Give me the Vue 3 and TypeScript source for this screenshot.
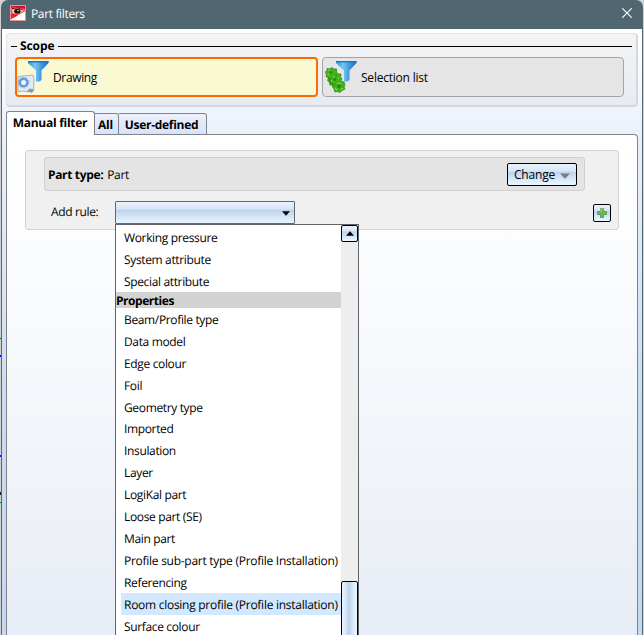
<script setup lang="ts">
interface Group {
  title?: string
  items: string[]
}

const groups: Group[] = [
  { items: ['Working pressure', 'System attribute', 'Special attribute'] },
  {
    title: 'Properties',
    items: [
      'Beam/Profile type',
      'Data model',
      'Edge colour',
      'Foil',
      'Geometry type',
      'Imported',
      'Insulation',
      'Layer',
      'LogiKal part',
      'Loose part (SE)',
      'Main part',
      'Profile sub-part type (Profile Installation)',
      'Referencing',
      'Room closing profile (Profile installation)',
      'Surface colour',
    ],
  },
]
const highlighted = 'Room closing profile (Profile installation)'
const backdropMarks = [
  { top: 338, height: 1, color: '#008000' },
  { top: 355, height: 2, color: '#0000ff' },
  { top: 455, height: 2, color: '#0000ff' },
  { top: 492, height: 3, color: '#101020' },
  { top: 502, height: 1, color: '#008000' },
]
</script>

<template>
  <div class="screen">
    <i
      v-for="m in backdropMarks"
      :key="m.top"
      class="mark"
      :style="{ top: m.top + 'px', height: m.height + 'px', background: m.color }"
    />
    <div class="window">
      <header class="titlebar">
        <svg class="logo" width="16" height="16" viewBox="0 0 16 16">
          <rect width="16" height="16" fill="#d80c2c" />
          <path d="M0 3 L6 2 L15 4 V8 L9 10 L1 9 Z" fill="#ef6b62" />
          <path d="M2 5 Q7 1 13 6 Q8 10 3 8 Z" fill="#f8c8bc" />
          <ellipse cx="7.3" cy="6.3" rx="3.2" ry="2.5" fill="#2a1012" />
          <path d="M2 3.7 Q8 1.5 12 4.5" fill="none" stroke="#6a1018" stroke-width="1" />
          <circle cx="8" cy="5.5" r=".7" fill="#fff" />
          <path d="M1 15 V14 L15 6.5 V15 Z" fill="#fff" />
          <path d="M0 10 L7 11 L0 14.5 Z" fill="#e12a3c" />
          <rect x=".5" y=".5" width="15" height="15" fill="none" stroke="#ee8d92" />
        </svg>
        <span class="title">Part filters</span>
        <svg class="close" width="10" height="10" viewBox="0 0 10 10">
          <path d="M.3 .3 L9.7 9.7 M9.7 .3 L.3 9.7" stroke="#fff" stroke-width="1.1" />
        </svg>
      </header>

      <main class="body">
        <section class="scope">
          <div class="legend"><i class="dash" /><b>Scope</b><i class="rule" /></div>
          <div class="choices">
            <button class="choice selected">
              <svg width="32" height="34" viewBox="0 0 32 34">
                <defs>
                  <linearGradient id="funnel" x1="0" x2="1">
                    <stop offset="0" stop-color="#2f8fd8" />
                    <stop offset=".35" stop-color="#7cc4f4" />
                    <stop offset=".65" stop-color="#3a9ae0" />
                    <stop offset="1" stop-color="#1b70bd" />
                  </linearGradient>
                </defs>
                <path d="M11 1 H31.5 V3 L24.5 10.5 V20 L22.5 21.5 H19 V10.5 L11 3 Z" fill="url(#funnel)" />
                <path d="M11 1 H31.5 V2.4 H11 Z" fill="#1878c8" />
                <path d="M1 16.5 L16 15 L17 19 L16.5 31 L13 29.5 L12 32 L6 31 L1 32 Z" fill="#e3e9f5" stroke="#8fa3c6" stroke-width=".8" />
                <path d="M10 31 L13 28.5 L17 29.5 L15 33 Z" fill="#8797b3" />
                <circle cx="6.6" cy="22.5" r="3.8" fill="#edf5fb" stroke="#5f9fd2" stroke-width="2.6" />
                <circle cx="6.6" cy="22.5" r="5.4" fill="none" stroke="#86b5dd" stroke-width="1" stroke-dasharray="1.7 1.7" />
              </svg>
              <span>Drawing</span>
            </button>
            <button class="choice other">
              <svg width="32" height="34" viewBox="0 0 32 34">
                <path d="M11 1 H31.5 V3 L24.5 10.5 V20 L22.5 21.5 H19 V10.5 L11 3 Z" fill="url(#funnel)" />
                <path d="M11 1 H31.5 V2.4 H11 Z" fill="#1878c8" />
                <g fill="#43b21d" stroke="#2c8f12" stroke-width=".8">
                  <path d="M2 8.5 L5 9 L6.5 7.5 L9 9 L11.5 9 L11.5 12 L13 14 L16 14 L15.5 17 L17 19 L15.5 21 L19 22 L20 25 L19 27 L20 29 L17 30.5 L15 32.5 L12.5 31.5 L10 32 L9 29 L7.5 27 L8 25 L5 25 L4.5 22 L2.5 20.5 L3.5 18 L1 16.5 L1.5 14 L0 12 L2 11 Z" />
                </g>
                <g fill="#288a10">
                  <circle cx="6" cy="12.5" r="1.3" />
                  <circle cx="10" cy="19.5" r="1.4" />
                  <circle cx="14" cy="26.5" r="1.9" />
                  <path d="M3 17 L7 18 L6 22 L9 24 L12 23 L9 26 L4 23 Z M9 16 L13 14 L11 17 Z" opacity=".6" />
                </g>
                <path d="M3 10.5 L5 10 M8 16.5 L10 17 M3 14 L4 15 M12 23.5 L16 23 M10 28 L12 30 M16 29.5 L18 28 M13 17.5 L14 19 M6 20 L7 22" stroke="#78dc4b" stroke-width="1.1" />
              </svg>
              <span>Selection list</span>
            </button>
          </div>
        </section>

        <nav class="tabs">
          <div class="tab active">Manual filter</div>
          <div class="tab all">All</div>
          <div class="tab user">User-defined</div>
        </nav>

        <section class="page">
          <div class="card">
            <div class="part">
              <b>Part type:</b><span class="value">Part</span>
              <button class="change">
                <span>Change</span>
                <svg width="10" height="6" viewBox="0 0 10 6"><path d="M0 .5 H10 L5 5.7 Z" fill="#7c7c7c" /></svg>
              </button>
            </div>
            <div class="add">
              <label>Add rule:</label>
              <div class="combo">
                <svg width="8" height="5" viewBox="0 0 8 5"><path d="M0 .3 H8 L4 4.8 Z" fill="#000" /></svg>
                <div class="dropdown">
                  <div class="list">
                    <template v-for="(g, gi) in groups" :key="gi">
                      <div v-if="g.title" class="group">{{ g.title }}</div>
                      <div
                        v-for="item in g.items"
                        :key="item"
                        class="item"
                        :class="{ hot: item === highlighted, long: item.length > 40 }"
                      >{{ item }}</div>
                    </template>
                  </div>
                  <div class="scroll">
                    <div class="up">
                      <svg width="8" height="5" viewBox="0 0 8 5"><path d="M0 4.7 H8 L4 .3 Z" fill="#000" /></svg>
                    </div>
                    <div class="thumb" />
                  </div>
                </div>
              </div>
              <button class="plus">
                <svg width="12" height="12" viewBox="0 0 12 12">
                  <path d="M4.5 1.5 H7.5 V4.5 H10.5 V7.5 H7.5 V10.5 H4.5 V7.5 H1.5 V4.5 H4.5 Z" fill="#6cb65a" stroke="#5f9e52" />
                  <path d="M5 5 V2 H7" fill="none" stroke="#9ed78c" />
                </svg>
              </button>
            </div>
          </div>
        </section>
      </main>
    </div>
  </div>
</template>

<style>
body {
  margin: 0;
  overflow: hidden;
}
</style>

<style scoped>
.screen,
.screen * {
  box-sizing: border-box;
}
.screen {
  position: relative;
  width: 644px;
  height: 635px;
  padding: 0 1px;
  overflow: hidden;
  background: #d2d2d2;
  font: 12px/16px 'Open Sans', 'Noto Sans', sans-serif;
  letter-spacing: -0.35px;
  text-rendering: geometricPrecision;
  color: #000;
}
button {
  margin: 0;
  padding: 0;
  font: inherit;
  color: inherit;
  letter-spacing: inherit;
}
.mark {
  position: absolute;
  left: 0;
  width: 1px;
}
.window {
  width: 642px;
  height: 635px;
  display: flex;
  flex-direction: column;
  border-radius: 7px 7px 0 0;
  overflow: hidden;
  background: #506772;
}
.titlebar {
  display: flex;
  align-items: center;
  height: 29px;
  flex: none;
  padding: 0 11px 3px 9px;
  color: #fff;
}
.title {
  margin-left: 5px;
  padding-top: 2px;
  flex: 1;
}
.body {
  flex: 1;
  margin: 0 1px;
  padding: 4px 4px 0;
  display: flex;
  flex-direction: column;
  background: linear-gradient(#fff 0, #f2f6fd 70px, #ebf0fa 106px, #dce8f6 230px, #c9dcf1 380px, #c5d9f0 100%);
}
.scope {
  flex: none;
  height: 74px;
  border: 1px solid #e3e4e6;
  border-right: 2px solid #d5d9de;
  border-bottom: 2px solid #d3d7dd;
  border-radius: 4px;
  background: linear-gradient(#f4f4f4, #e7ebf2);
  padding: 4px 4px 0 4px;
}
.legend {
  display: flex;
  align-items: center;
  height: 16px;
  letter-spacing: -0.1px;
}
.legend b {
  margin: 0 4px 0 3px;
}
.dash,
.rule {
  height: 1px;
  background: #000;
}
.dash {
  width: 6px;
}
.rule {
  flex: 1;
}
.choices {
  display: flex;
  gap: 4px;
  margin: 3px 0 0 4px;
}
.choice {
  display: flex;
  align-items: center;
  width: 303px;
  height: 40px;
  padding-left: 2px;
  border: 1px solid #a5a5a7;
  border-radius: 4px;
  background: #e5e5e5;
}
.choice.other {
  width: 302px;
  letter-spacing: -0.22px;
}
.choice.selected {
  padding-left: 0;
  border: 2px solid #ff6a00;
  background: #fafad2;
}
.choice span {
  margin-left: 4px;
  padding-top: 2px;
}
.tabs {
  display: flex;
  align-items: flex-end;
  flex: none;
  height: 24px;
  margin-top: 4px;
  font-weight: bold;
  letter-spacing: -0.28px;
}
.tab {
  height: 22px;
  padding: 3px 2px 0 0;
  border: 1px solid #7f8288;
  border-left: 0;
  border-radius: 0 3px 0 0;
  background: linear-gradient(#ecf0fb, #d7e2fb);
  text-align: center;
  white-space: nowrap;
}
.tab.active {
  width: 89px;
  height: 24px;
  padding-right: 1px;
  border-left: 1px solid #7f8288;
  border-bottom: 0;
  border-radius: 3px 3px 0 0;
  background: #fff;
}
.tab.all {
  width: 24px;
}
.tab.user {
  width: 88px;
}
.page {
  flex: 1;
  margin-top: -1px;
  padding: 15px 18px 0;
  border: 1px solid #808287;
  border-bottom: 0;
  border-top-right-radius: 4px;
  background: linear-gradient(#fff 0, #fcfdff 100px, #f2f6fa 300px, #edf0f6 400px, #e7edf6 100%);
  position: relative;
}
.page::before {
  content: '';
  position: absolute;
  left: 0;
  top: -1px;
  width: 87px;
  height: 1px;
  background: #fff;
}
.card {
  height: 80px;
  width: 594px;
  border: 1px solid #d2d2d2;
  border-radius: 3px;
  background: #f0f0f0;
  padding: 6px 7px 0 18px;
}
.part {
  display: flex;
  align-items: center;
  width: 541px;
  height: 34px;
  padding: 0 7px 0 3px;
  border: 1px solid #d0d0d0;
  border-radius: 3px;
  background: #e4e4e4;
}
.part b,
.value {
  padding-top: 2px;
}
.value {
  margin-left: 4px;
  flex: 1;
}
.change,
.plus,
.up {
  display: flex;
  align-items: center;
  justify-content: center;
  border: 1px solid #000;
  border-radius: 2px;
  background: linear-gradient(#eaf3fd 0, #d5e4f6 35%, #bdd2ec 38%, #d4e6f7 70%, #eaf8ff 100%);
}
.change {
  width: 70px;
  height: 23px;
  gap: 5px;
  letter-spacing: -0.2px;
}
.change span {
  padding-top: 1px;
}
.change svg {
  margin-top: 3px;
}
.add {
  display: flex;
  align-items: center;
  height: 23px;
  margin-top: 10px;
}
label {
  width: 71px;
  padding: 0 0 1px 7px;
}
.combo {
  position: relative;
  display: flex;
  align-items: center;
  justify-content: flex-end;
  width: 180px;
  height: 23px;
  padding: 2px 4px 0 0;
  border: 1px solid #65676a;
  border-radius: 1px;
  background: linear-gradient(#eaf3fc 0, #d5e4f5 35%, #bdd2eb 38%, #d4e5f6 70%, #e9f6fe 100%);
}
.plus {
  width: 18px;
  height: 18px;
  margin-left: auto;
}
.dropdown {
  position: absolute;
  left: -1px;
  top: 22px;
  width: 244px;
  height: 430px;
  display: flex;
  border: 1px solid #606266;
  background: #fff;
  z-index: 2;
}
.list {
  width: 225px;
  padding-top: 1.4px;
  overflow: hidden;
  flex: none;
}
.item {
  height: 21.94px;
  padding-top: 0.56px;
  line-height: 21.94px;
  margin-left: 5px;
  padding-left: 3px;
  white-space: nowrap;
}
.item.long {
  letter-spacing: -0.27px;
}
.item.hot {
  background: #d1e8ff;
}
.group {
  height: 16px;
  line-height: 17px;
  background: #d3d3d3;
  font-weight: bold;
  letter-spacing: -0.45px;
}
.scroll {
  width: 17px;
  display: flex;
  flex-direction: column;
  justify-content: space-between;
  background: #eee;
}
.up {
  height: 17px;
}
.thumb {
  height: 72px;
  border: 1px solid #000;
  border-radius: 2px;
  background: linear-gradient(90deg, #eaf3fd 0, #d8e6f7 25%, #bdd2ec 45%, #d4e6f7 70%, #eaf8ff 100%);
}
</style>
